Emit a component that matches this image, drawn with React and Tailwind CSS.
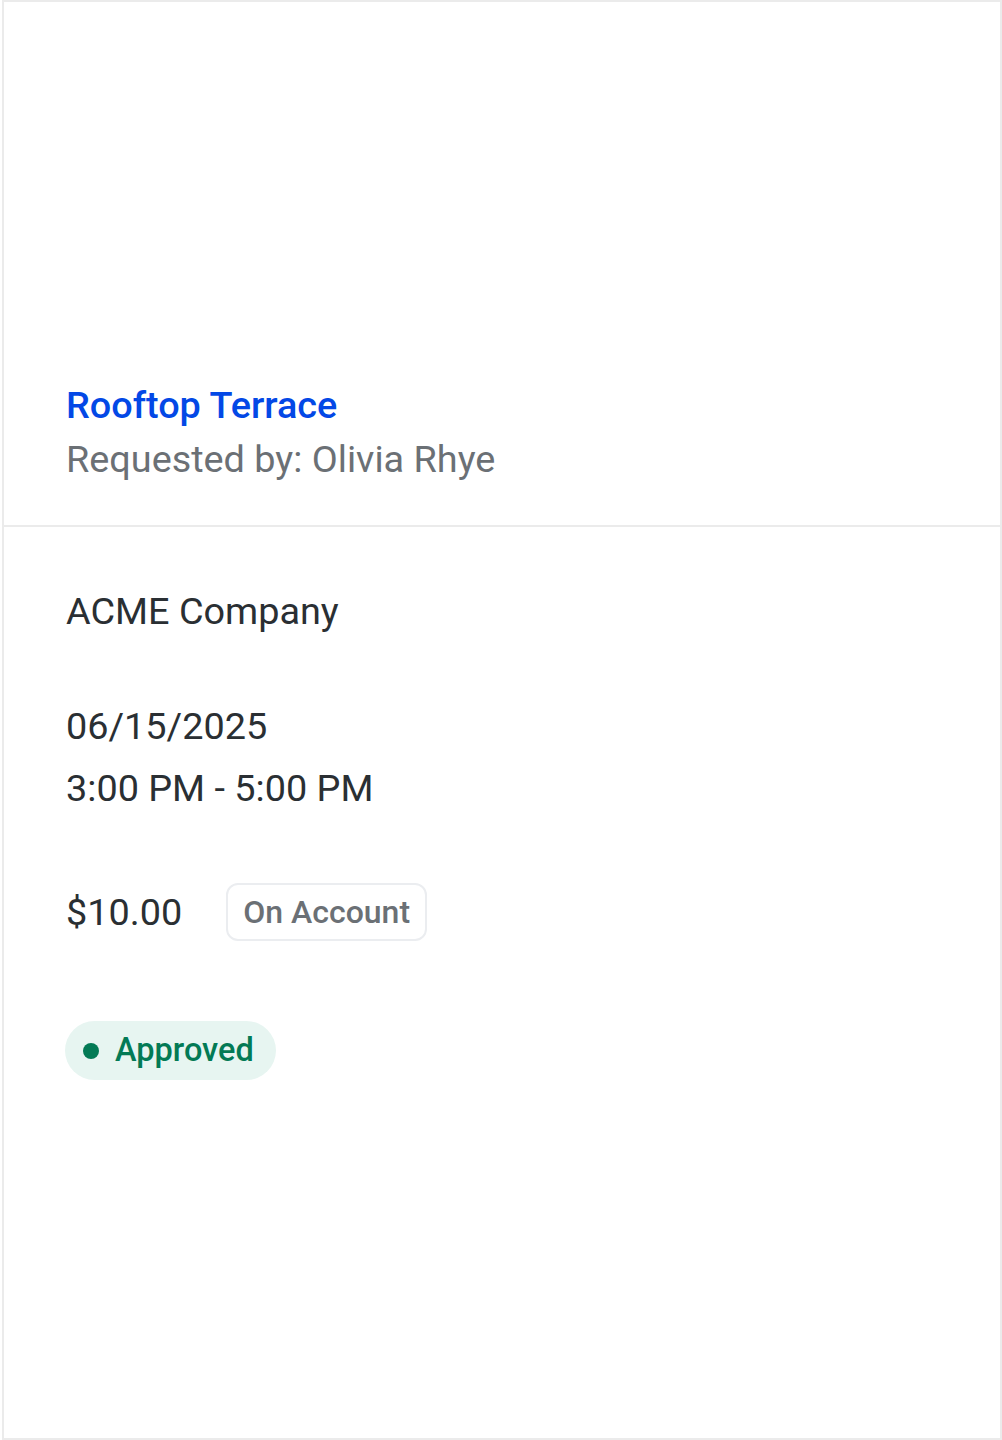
export default function App() {
  return (
    <div className="w-[1002px] h-[1440px] bg-white pl-[2px]" style={{ fontFamily: "Roboto, 'Noto Sans', sans-serif" }}>
      <div className="h-full border-2 border-[#ebebeb] flex flex-col">
        <div className="pt-[376px] pb-[39px] pl-[62px] border-b-2 border-[#ebebeb] flex flex-col">
          <div className="text-[37.8px] leading-[54px] font-medium text-[#0348e6]">Rooftop Terrace</div>
          <div className="text-[37.8px] leading-[54px] text-[#6b7075]">Requested by: Olivia Rhye</div>
        </div>
        <div className="pl-[62px] pt-[57px] flex flex-col items-start text-[#2a2f33]">
          <div className="text-[37.8px] leading-[54px]">ACME Company</div>
          <div className="mt-[61px] text-[37.8px] leading-[54px]">06/15/2025</div>
          <div className="mt-[8px] text-[37.8px] leading-[54px]">3:00 PM - 5:00 PM</div>
          <div className="mt-[68px] flex items-center gap-[44px]">
            <div className="text-[37.8px] leading-[54px]">$10.00</div>
            <div className="h-[58px] px-[15px] flex items-center border-2 border-[#ebedf0] rounded-[12px] text-[32px] font-medium text-[#6b7075]">
              On Account
            </div>
          </div>
          <div className="mt-[80px] -ml-[1px] h-[59px] pl-[18px] pr-[22px] flex items-center gap-[16px] rounded-full bg-[#e7f5f1] text-[#037a55]">
            <span className="w-[16px] h-[16px] rounded-full bg-[#037a55]"></span>
            <span className="text-[32.5px] font-medium leading-none">Approved</span>
          </div>
        </div>
      </div>
    </div>
  );
}
